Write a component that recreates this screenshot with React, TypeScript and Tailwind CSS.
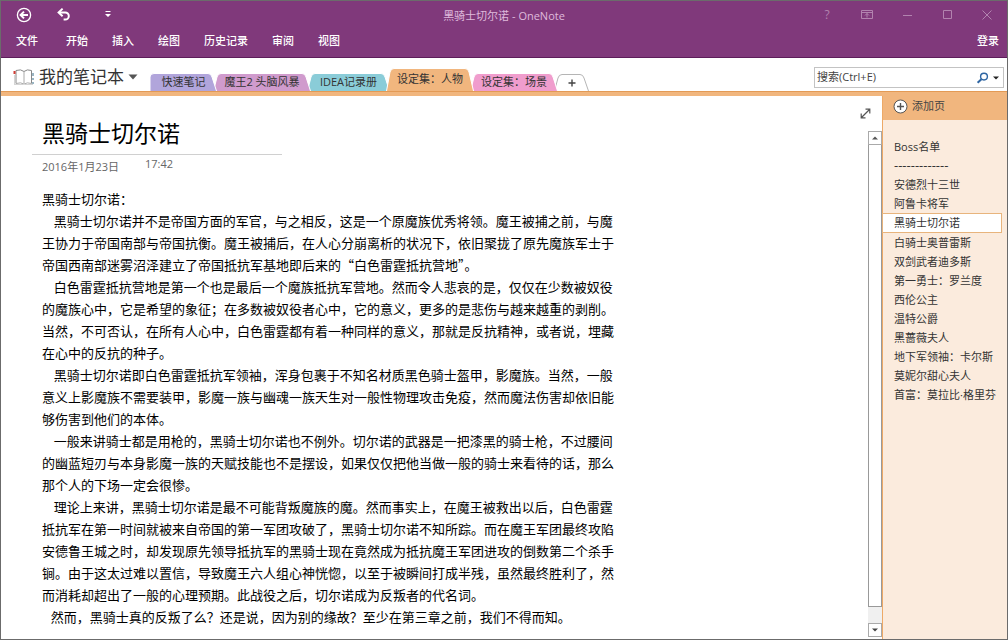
import React from 'react';

const menus = ['开始', '插入', '绘图', '历史记录', '审阅', '视图'];

const sections = [
    { label: '快速笔记', color: '#b1a5db', width: 67 },
    { label: '魔王2 头脑风暴', color: '#d09bcd', width: 98 },
    { label: 'IDEA记录册', color: '#8accd8', width: 83 },
    { label: '设定集：人物', color: '#f1b67e', width: 88, active: true },
    { label: '设定集：场景', color: '#f09dcd', width: 88 },
];

const pages = [
    '安德烈十三世',
    '阿鲁卡将军',
    '黑骑士切尔诺',
    '白骑士奥普雷斯',
    '双剑武者迪多斯',
    '第一勇士：罗兰度',
    '西伦公主',
    '温特公爵',
    '黑蔷薇夫人',
    '地下军领袖：卡尔斯',
    '莫妮尔甜心夫人',
    '首富：莫拉比·格里芬',
];

const paragraphs = [
    ['黑骑士切尔诺：'],
    [
        '    黑骑士切尔诺并不是帝国方面的军官，与之相反，这是一个原魔族优秀将领。魔王被捕之前，与魔',
        '王协力于帝国南部与帝国抗衡。魔王被捕后，在人心分崩离析的状况下，依旧聚拢了原先魔族军士于',
        '帝国西南部迷雾沼泽建立了帝国抵抗军基地即后来的“白色雷霆抵抗营地”。',
    ],
    [
        '    白色雷霆抵抗营地是第一个也是最后一个魔族抵抗军营地。然而令人悲哀的是，仅仅在少数被奴役',
        '的魔族心中，它是希望的象征；在多数被奴役者心中，它的意义，更多的是悲伤与越来越重的剥削。',
        '当然，不可否认，在所有人心中，白色雷霆都有着一种同样的意义，那就是反抗精神，或者说，埋藏',
        '在心中的反抗的种子。',
    ],
    [
        '    黑骑士切尔诺即白色雷霆抵抗军领袖，浑身包裹于不知名材质黑色骑士盔甲，影魔族。当然，一般',
        '意义上影魔族不需要装甲，影魔一族与幽魂一族天生对一般性物理攻击免疫，然而魔法伤害却依旧能',
        '够伤害到他们的本体。',
    ],
    [
        '    一般来讲骑士都是用枪的，黑骑士切尔诺也不例外。切尔诺的武器是一把漆黑的骑士枪，不过腰间',
        '的幽蓝短刃与本身影魔一族的天赋技能也不是摆设，如果仅仅把他当做一般的骑士来看待的话，那么',
        '那个人的下场一定会很惨。',
    ],
    [
        '    理论上来讲，黑骑士切尔诺是最不可能背叛魔族的魔。然而事实上，在魔王被救出以后，白色雷霆',
        '抵抗军在第一时间就被来自帝国的第一军团攻破了，黑骑士切尔诺不知所踪。而在魔王军团最终攻陷',
        '安德鲁王城之时，却发现原先领导抵抗军的黑骑士现在竟然成为抵抗魔王军团进攻的倒数第二个杀手',
        '锏。由于这太过难以置信，导致魔王六人组心神恍惚，以至于被瞬间打成半残，虽然最终胜利了，然',
        '而消耗却超出了一般的心理预期。此战役之后，切尔诺成为反叛者的代名词。',
    ],
    ['   然而，黑骑士真的反叛了么？还是说，因为别的缘故？至少在第三章之前，我们不得而知。'],
];

const TabShape: React.FC<{ width: number; height: number; fill: string; stroke?: string; square?: boolean }> = ({
    width: w,
    height: h,
    fill,
    stroke = '#ffffff',
    square,
}) => (
    <svg className="absolute inset-0 -z-10" width={w} height={h} aria-hidden="true">
        <path
            d={`M${square ? 0 : 0.5} ${h} L${square ? 0 : 4} 4 Q${square ? 0 : 5} .5 ${square ? 4 : 8} .5 H${w - 9} Q${w - 6} .5 ${w - 5} 4 L${w - 0.5} ${h}`}
            fill={fill}
            stroke={stroke}
        />
    </svg>
);

const TitleBar: React.FC = () => (
    <header className="flex h-[57px] shrink-0 flex-col border-b border-[#5d1d5a] bg-[#80397b] text-white">
        <div className="grid h-7 grid-cols-3 items-center">
            <div className="flex items-center pl-[15px]">
                <button aria-label="返回">
                    <svg width="16" height="16" viewBox="0 0 16 16" fill="none" stroke="currentColor">
                        <circle cx="8" cy="8" r="6.6" strokeWidth="1.3" />
                        <path d="M12 8H5M8 4.6 4.6 8 8 11.4" strokeWidth="2" />
                    </svg>
                </button>
                <button className="ml-6" aria-label="撤消">
                    <svg width="16" height="16" viewBox="0 0 16 16" fill="none" stroke="currentColor" strokeWidth="2">
                        <path d="M3 5.4h6.2a3.6 3.6 0 0 1 0 7.2H7.6" />
                        <path d="M6.6 1.6 2.6 5.4l4 3.8" />
                    </svg>
                </button>
                <button className="ml-8" aria-label="自定义快速访问工具栏">
                    <svg width="8" height="10" viewBox="0 0 8 10" fill="currentColor">
                        <path d="M1.5 1h5v1h-5zM1 4h6L4 7z" />
                    </svg>
                </button>
            </div>
            <h1 className="pt-[2px] text-center text-[11px] whitespace-nowrap text-[#dfb9dc]">黑骑士切尔诺 - OneNote</h1>
            <div className="flex items-center justify-end gap-6 pr-3 text-[#b283af]">
                <button className="w-4 text-xs leading-4" aria-label="帮助">?</button>
                <button aria-label="功能区显示选项">
                    <svg width="16" height="16" viewBox="0 0 16 16" fill="none" stroke="currentColor">
                        <path d="M2.5 3.5h11v8h-11zM2.5 5.5h11M8 10.5v-4M6 8.5l2-2 2 2" />
                    </svg>
                </button>
                <button aria-label="最小化">
                    <svg width="16" height="16" viewBox="0 0 16 16" stroke="currentColor">
                        <path d="M4 8.5h9" />
                    </svg>
                </button>
                <button aria-label="最大化">
                    <svg width="16" height="16" viewBox="0 0 16 16" fill="none" stroke="currentColor">
                        <path d="M4.5 3.5h8v8h-8z" />
                    </svg>
                </button>
                <button aria-label="关闭">
                    <svg width="16" height="16" viewBox="0 0 16 16" stroke="currentColor">
                        <path d="m3.5 3.5 9 9m0-9-9 9" />
                    </svg>
                </button>
            </div>
        </div>
        <nav className="flex h-6 items-center gap-7 pr-2 pl-[15px] text-[11px] font-medium">
            <button>文件</button>
            <div className="flex gap-6">
                {menus.map((m) => (
                    <button key={m}>{m}</button>
                ))}
            </div>
            <button className="ml-auto">登录</button>
        </nav>
    </header>
);

const SectionBar: React.FC = () => (
    <div className="flex h-[33px] shrink-0 items-end">
        <button className="flex h-7 w-[149px] shrink-0 items-center pl-3 text-[17px] whitespace-nowrap text-[#333]">
            <svg className="mr-1 shrink-0" width="22" height="18" viewBox="0 0 22 18" fill="none" stroke="#777">
                <path d="M3 15.5V2.5Q8 .8 11 3.5 14 .8 18.5 2.5v13" stroke="#888" />
                <path d="M11 3.5v12M3 15.5q5-1.6 8 .6 3-2.2 7.5-.6" stroke="#aaa" />
                <path d="M1.5 3v3" stroke="#d13c34" strokeWidth="2" />
                <path d="M1.5 7.5v9h8m3 0h7.5" stroke="#aaa" strokeDasharray="1 1" />
                <path d="M20 5v3m0 2v2m0 2v2" stroke="#356a86" />
            </svg>
            我的笔记本
            <svg className="ml-1 shrink-0" width="10" height="6" viewBox="0 0 10 6" fill="#555">
                <path d="M.5.5h9L5 5.5z" />
            </svg>
        </button>
        <div className="isolate flex items-end">
            {sections.map((s, i) => {
                const height = s.active ? 23 : 18;
                return (
                    <button
                        key={s.label}
                        className={`relative isolate text-[11px] whitespace-nowrap text-[#333] ${i > 0 ? '-ml-1' : ''} ${s.active ? '' : 'pt-px'}`}
                        style={{ width: s.width, height, zIndex: s.active ? 20 : 10 - i }}
                    >
                        <TabShape width={s.width} height={height} fill={s.color} square={i === 0} />
                        {s.label}
                    </button>
                );
            })}
            <button className="relative isolate -ml-1 flex h-[17px] w-[35px] items-center justify-center" aria-label="新建分区">
                <TabShape width={35} height={17} fill="#ffffff" stroke="#b5b5b5" />
                <svg width="8" height="8" viewBox="0 0 8 8" stroke="#444" strokeWidth="1.4">
                    <path d="M4 .5v7M.5 4h7" />
                </svg>
            </button>
        </div>
        <form className="mr-[3px] mb-[3px] ml-auto flex h-[21px] w-[190px] items-center border border-[#c3c3c3] bg-white pr-1 pl-[2px]">
            <input
                className="w-full min-w-0 text-[11px] outline-none placeholder:text-[#444] placeholder:opacity-100"
                type="text"
                aria-label="搜索"
                placeholder="搜索(Ctrl+E)"
            />
            <button className="flex shrink-0 items-center gap-1" type="button" aria-label="搜索选项">
                <svg width="13" height="12" viewBox="0 0 13 12" fill="none" stroke="#2f66a3">
                    <circle cx="8" cy="4.6" r="3.4" strokeWidth="1.4" />
                    <path d="M5.4 7.2 1.6 10.8" strokeWidth="2" />
                </svg>
                <svg width="6" height="4" viewBox="0 0 6 4" fill="#222">
                    <path d="M0 .5h6L3 3.5z" />
                </svg>
            </button>
        </form>
    </div>
);

const ScrollBar: React.FC = () => (
    <div className="flex flex-1 flex-col bg-[#f0f0f0]">
        <button className="flex h-[14px] items-center justify-center border border-[#aaa] bg-white" aria-label="向上滚动">
            <svg width="6" height="4" viewBox="0 0 6 4" fill="#555">
                <path d="M0 3.5h6L3 .5z" />
            </svg>
        </button>
        <div className="mb-4 flex-1 border border-t-0 border-[#999] bg-white"></div>
        <button className="flex h-[14px] items-center justify-center border border-[#aaa] bg-white" aria-label="向下滚动">
            <svg width="6" height="4" viewBox="0 0 6 4" fill="#444">
                <path d="M0 .5h6L3 3.5z" />
            </svg>
        </button>
    </div>
);

const PageList: React.FC = () => (
    <aside className="w-[125px] shrink-0 border-l border-[#eda967] bg-[#fbebdd] text-[11px] text-[#333]">
        <button className="flex h-6 w-full items-center gap-1 bg-[#f1b67e] pb-1 pl-[10px] text-[#444]">
            <svg width="15" height="15" viewBox="0 0 15 15" fill="none" stroke="#555">
                <circle cx="7.5" cy="7.5" r="6.5" fill="#fff" />
                <path d="M7.5 4v7M4 7.5h7" strokeWidth="1.4" />
            </svg>
            添加页
        </button>
        <ul className="mt-[17px] leading-[19px] whitespace-nowrap">
            <li>
                <a href="#" className="block h-[19px] pl-[11px]">Boss名单</a>
            </li>
            <li>
                <a href="#" className="block h-[19px] pl-[11px] text-[13px]">-------------</a>
            </li>
            {pages.map((p) => (
                <li key={p}>
                    {p === '黑骑士切尔诺' ? (
                        <a href="#" className="mr-[5px] -ml-px block h-5 border border-[#e8b47c] bg-white pl-[11px] leading-[18px]">{p}</a>
                    ) : (
                        <a href="#" className="block h-[19px] pl-[11px]">{p}</a>
                    )}
                </li>
            ))}
        </ul>
    </aside>
);

const App: React.FC = () => {
    return (
        <div
            lang="zh-CN"
            className="flex min-h-screen flex-col border border-[#6b6b6b] bg-white font-['Open_Sans','Noto_Sans_CJK_SC',sans-serif]"
        >
            <TitleBar />
            <SectionBar />
            <div className="h-[5px] shrink-0 border-t border-[#e39a55] bg-[#f1b67e]"></div>
            <div className="flex flex-1">
                <main className="min-w-0 flex-1 pl-[31px] text-black">
                    <div className="w-[250px] border-b border-[#d0d0d0] pt-5 pb-1 pl-[10px]">
                        <h2 className="text-[23px] leading-[34px]">黑骑士切尔诺</h2>
                    </div>
                    <div className="flex gap-[26px] pl-[10px] text-[11px] leading-4 text-[#666]">
                        <span className="pt-1">2016年1月23日</span>
                        <span className="pt-px">17:42</span>
                    </div>
                    <article className="mt-[13px] pl-[10px] font-['Noto_Sans_CJK_SC',sans-serif] text-[13px] leading-[22px]">
                        {paragraphs.map((lines, i) => (
                            <p key={i} className="whitespace-pre">{lines.join('\n')}</p>
                        ))}
                    </article>
                </main>
                <div className="flex w-[23px] shrink-0 flex-col pt-3 pb-[2px]">
                    <button className="mb-3 ml-px h-[11px] w-[11px]" aria-label="整页视图">
                        <svg width="11" height="11" viewBox="0 0 11 11" fill="none" stroke="#555" strokeWidth="1.2">
                            <path d="M1.5 9.5l8-8M5.5 1.2h4.3v4.3M1.2 5.5v4.3h4.3" />
                        </svg>
                    </button>
                    <div className="ml-[9px] flex flex-1">
                        <ScrollBar />
                    </div>
                </div>
                <PageList />
            </div>
        </div>
    );
};

export default App;
